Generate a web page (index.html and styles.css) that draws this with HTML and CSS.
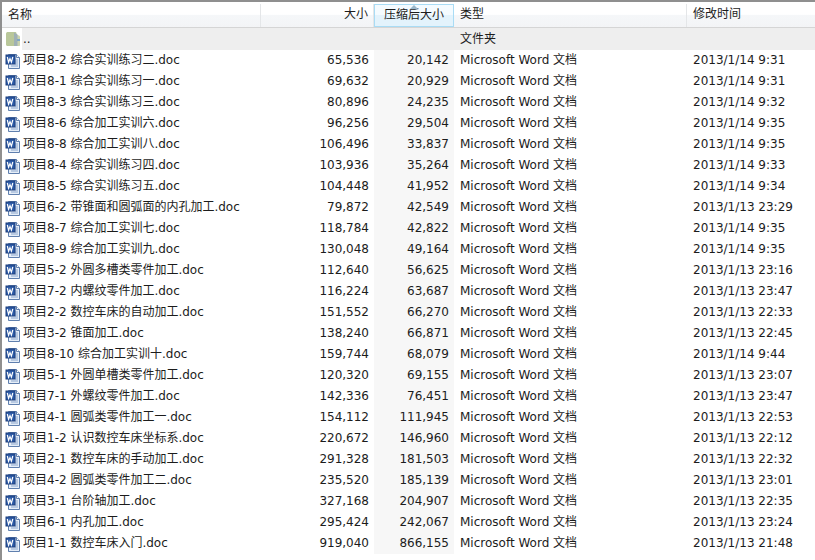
FILE: index.html
```html
<!DOCTYPE html>
<html lang="zh">
<head>
<meta charset="utf-8">
<title>文件列表</title>
<link rel="stylesheet" href="styles.css">
</head>
<body>
<svg class="defs" width="0" height="0" aria-hidden="true">
<symbol id="doc" viewBox="0 0 16 16">
<path d="M3.5 1.5h8l3 3v11h-11z" fill="#e6eef8" stroke="#5f7fae"/>
<path d="M11.5 1.5v3h3" fill="#fff" stroke="#5f7fae"/>
<path d="M10 7h3M10 9h3M10 11h3M6 13h7" stroke="#8aa5cc"/>
<rect x="1" y="2" width="9" height="9" fill="#2c5aa6" stroke="#1d3f7c"/>
<path d="M2.3 4l1.3 5.2 1.4-3.6 1.4 3.6L7.8 4" fill="none" stroke="#fff" stroke-width="1.2"/>
</symbol>
<symbol id="folder" viewBox="0 0 16 16">
<path d="M1 2.5C1 1.5 2 1 3 1h7c1 0 1.500 .5 1.500 1.500V15H3c-1 0-2-.5-2-1.500z" fill="#b9c79a"/>
<path d="M10 3l4 1.500c.7.3 1 .7 1 1.500v8c0 .8-.4 1-1 1h-4z" fill="#c9d2ae"/>
<path d="M9 1.500l3.500 2V15H9z" fill="#9fb0b5"/>
<path d="M12 8h3v2h-3z" fill="#7fa6c4"/>
</symbol>
</svg>
<main class="list">
<header class="row head">
<div class="name">名称</div>
<div class="size">大小</div>
<div class="packed sorted">压缩后大小</div>
<div class="type">类型</div>
<div class="date">修改时间</div>
</header>
<div class="row parent">
<div class="name"><svg class="icon"><use href="#folder"/></svg><span>..</span></div>
<div class="size"></div>
<div class="packed"></div>
<div class="type">文件夹</div>
<div class="date"></div>
</div>
<div class="row"><div class="name"><svg class="icon"><use href="#doc"/></svg><span>项目8-2 综合实训练习二.doc</span></div><div class="size">65,536</div><div class="packed">20,142</div><div class="type">Microsoft Word 文档</div><div class="date">2013/1/14 9:31</div></div>
<div class="row"><div class="name"><svg class="icon"><use href="#doc"/></svg><span>项目8-1 综合实训练习一.doc</span></div><div class="size">69,632</div><div class="packed">20,929</div><div class="type">Microsoft Word 文档</div><div class="date">2013/1/14 9:31</div></div>
<div class="row"><div class="name"><svg class="icon"><use href="#doc"/></svg><span>项目8-3 综合实训练习三.doc</span></div><div class="size">80,896</div><div class="packed">24,235</div><div class="type">Microsoft Word 文档</div><div class="date">2013/1/14 9:32</div></div>
<div class="row"><div class="name"><svg class="icon"><use href="#doc"/></svg><span>项目8-6 综合加工实训六.doc</span></div><div class="size">96,256</div><div class="packed">29,504</div><div class="type">Microsoft Word 文档</div><div class="date">2013/1/14 9:35</div></div>
<div class="row"><div class="name"><svg class="icon"><use href="#doc"/></svg><span>项目8-8 综合加工实训八.doc</span></div><div class="size">106,496</div><div class="packed">33,837</div><div class="type">Microsoft Word 文档</div><div class="date">2013/1/14 9:35</div></div>
<div class="row"><div class="name"><svg class="icon"><use href="#doc"/></svg><span>项目8-4 综合实训练习四.doc</span></div><div class="size">103,936</div><div class="packed">35,264</div><div class="type">Microsoft Word 文档</div><div class="date">2013/1/14 9:33</div></div>
<div class="row"><div class="name"><svg class="icon"><use href="#doc"/></svg><span>项目8-5 综合实训练习五.doc</span></div><div class="size">104,448</div><div class="packed">41,952</div><div class="type">Microsoft Word 文档</div><div class="date">2013/1/14 9:34</div></div>
<div class="row"><div class="name"><svg class="icon"><use href="#doc"/></svg><span>项目6-2 带锥面和圆弧面的内孔加工.doc</span></div><div class="size">79,872</div><div class="packed">42,549</div><div class="type">Microsoft Word 文档</div><div class="date">2013/1/13 23:29</div></div>
<div class="row"><div class="name"><svg class="icon"><use href="#doc"/></svg><span>项目8-7 综合加工实训七.doc</span></div><div class="size">118,784</div><div class="packed">42,822</div><div class="type">Microsoft Word 文档</div><div class="date">2013/1/14 9:35</div></div>
<div class="row"><div class="name"><svg class="icon"><use href="#doc"/></svg><span>项目8-9 综合加工实训九.doc</span></div><div class="size">130,048</div><div class="packed">49,164</div><div class="type">Microsoft Word 文档</div><div class="date">2013/1/14 9:35</div></div>
<div class="row"><div class="name"><svg class="icon"><use href="#doc"/></svg><span>项目5-2 外圆多槽类零件加工.doc</span></div><div class="size">112,640</div><div class="packed">56,625</div><div class="type">Microsoft Word 文档</div><div class="date">2013/1/13 23:16</div></div>
<div class="row"><div class="name"><svg class="icon"><use href="#doc"/></svg><span>项目7-2 内螺纹零件加工.doc</span></div><div class="size">116,224</div><div class="packed">63,687</div><div class="type">Microsoft Word 文档</div><div class="date">2013/1/13 23:47</div></div>
<div class="row"><div class="name"><svg class="icon"><use href="#doc"/></svg><span>项目2-2 数控车床的自动加工.doc</span></div><div class="size">151,552</div><div class="packed">66,270</div><div class="type">Microsoft Word 文档</div><div class="date">2013/1/13 22:33</div></div>
<div class="row"><div class="name"><svg class="icon"><use href="#doc"/></svg><span>项目3-2 锥面加工.doc</span></div><div class="size">138,240</div><div class="packed">66,871</div><div class="type">Microsoft Word 文档</div><div class="date">2013/1/13 22:45</div></div>
<div class="row"><div class="name"><svg class="icon"><use href="#doc"/></svg><span>项目8-10 综合加工实训十.doc</span></div><div class="size">159,744</div><div class="packed">68,079</div><div class="type">Microsoft Word 文档</div><div class="date">2013/1/14 9:44</div></div>
<div class="row"><div class="name"><svg class="icon"><use href="#doc"/></svg><span>项目5-1 外圆单槽类零件加工.doc</span></div><div class="size">120,320</div><div class="packed">69,155</div><div class="type">Microsoft Word 文档</div><div class="date">2013/1/13 23:07</div></div>
<div class="row"><div class="name"><svg class="icon"><use href="#doc"/></svg><span>项目7-1 外螺纹零件加工.doc</span></div><div class="size">142,336</div><div class="packed">76,451</div><div class="type">Microsoft Word 文档</div><div class="date">2013/1/13 23:47</div></div>
<div class="row"><div class="name"><svg class="icon"><use href="#doc"/></svg><span>项目4-1 圆弧类零件加工一.doc</span></div><div class="size">154,112</div><div class="packed">111,945</div><div class="type">Microsoft Word 文档</div><div class="date">2013/1/13 22:53</div></div>
<div class="row"><div class="name"><svg class="icon"><use href="#doc"/></svg><span>项目1-2 认识数控车床坐标系.doc</span></div><div class="size">220,672</div><div class="packed">146,960</div><div class="type">Microsoft Word 文档</div><div class="date">2013/1/13 22:12</div></div>
<div class="row"><div class="name"><svg class="icon"><use href="#doc"/></svg><span>项目2-1 数控车床的手动加工.doc</span></div><div class="size">291,328</div><div class="packed">181,503</div><div class="type">Microsoft Word 文档</div><div class="date">2013/1/13 22:32</div></div>
<div class="row"><div class="name"><svg class="icon"><use href="#doc"/></svg><span>项目4-2 圆弧类零件加工二.doc</span></div><div class="size">235,520</div><div class="packed">185,139</div><div class="type">Microsoft Word 文档</div><div class="date">2013/1/13 23:01</div></div>
<div class="row"><div class="name"><svg class="icon"><use href="#doc"/></svg><span>项目3-1 台阶轴加工.doc</span></div><div class="size">327,168</div><div class="packed">204,907</div><div class="type">Microsoft Word 文档</div><div class="date">2013/1/13 22:35</div></div>
<div class="row"><div class="name"><svg class="icon"><use href="#doc"/></svg><span>项目6-1 内孔加工.doc</span></div><div class="size">295,424</div><div class="packed">242,067</div><div class="type">Microsoft Word 文档</div><div class="date">2013/1/13 23:24</div></div>
<div class="row"><div class="name"><svg class="icon"><use href="#doc"/></svg><span>项目1-1 数控车床入门.doc</span></div><div class="size">919,040</div><div class="packed">866,155</div><div class="type">Microsoft Word 文档</div><div class="date">2013/1/13 21:48</div></div>
</main>
</body>
</html>
```
FILE: styles.css
```css
html, body {
  margin: 0;
  padding: 0;
  height: 100%;
  overflow: hidden;
  background: #fff;
}
.defs { position: absolute; }
.list {
  box-sizing: border-box;
  height: 560px;
  border-top: 2px solid #8f8f8f;
  border-left: 2px solid #8f8f8f;
  padding-top: 2px;
  font: 12px/21px "DejaVu Sans", "Noto Sans CJK SC", sans-serif;
  color: #1c1c1c;
  background: linear-gradient(#fff, #fff) no-repeat;
}
.row {
  display: flex;
  height: 21px;
}
.row > div {
  box-sizing: border-box;
  height: 100%;
  white-space: nowrap;
}
.name { width: 259px; display: flex; align-items: center; padding-left: 3px; }
.size { width: 113px; text-align: right; padding-right: 5px; }
.packed { width: 80px; text-align: right; padding-right: 5px; background: #f7f7f7; }
.type { width: 233px; padding-left: 6px; }
.date { flex: 1; padding-left: 6px; }
.icon { width: 16px; height: 16px; flex: none; margin-right: 2px; }
.head {
  height: 23px;
  border-bottom: 1px solid #d5d5d5;
  background: linear-gradient(#fff 0, #fff 45%, #f5f7f9 50%, #f3f4f6 100%);
  line-height: 21px;
}
.head > div { border-right: 1px solid #e4e6e8; }
.head .name { padding-left: 6px; }
.head .packed {
  position: relative;
  text-align: center;
  padding: 0;
  border: 1px solid #a9dcf5;
  background: linear-gradient(#f4fbff 45%, #e3f3fc 50%);
}
.head .packed::before {
  content: "";
  position: absolute;
  top: 0;
  left: 35px;
  border: 4px solid transparent;
  border-top: 0;
  border-bottom: 4px solid #9ab8cc;
}
.head .type, .head .date { border-right: 0; }
.head .type { border-right: 1px solid #e4e6e8; }
.parent { height: 22px; background: #eeeeee; line-height: 22px; }
.parent .packed { background: #eeeeee; }
.parent .name { background: linear-gradient(90deg, #fff 20px, #eee 20px); }
```
